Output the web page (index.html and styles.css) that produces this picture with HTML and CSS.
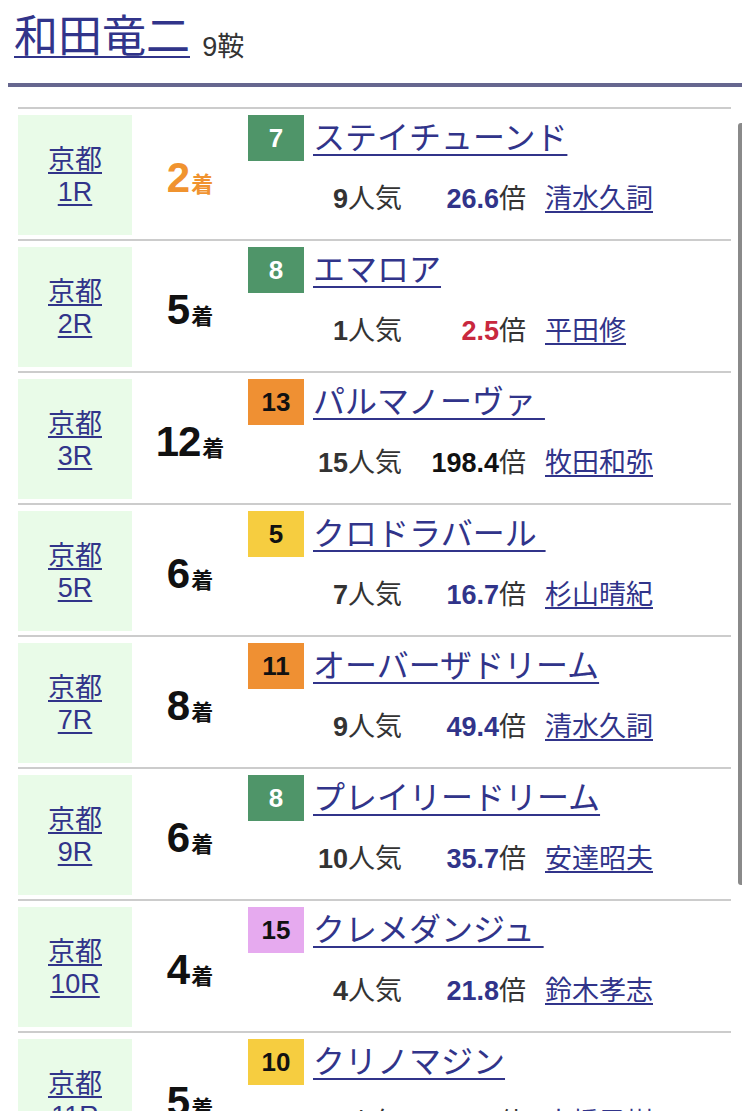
FILE: index.html
```html
<!DOCTYPE html>
<html lang="ja">
<head>
<meta charset="utf-8">
<title>和田竜二</title>
<link rel="stylesheet" href="styles.css">
</head>
<body>
<h1 class="title"><a href="#" class="jockey-name">和田竜二</a> <span class="count">9鞍</span></h1>
<div class="rule"></div>
<div class="races">
  <div class="row">
    <div class="venue"><a href="#">京都<br>1R</a></div>
    <div class="rank second"><span class="num">2</span><span class="suf">着</span></div>
    <div class="info">
      <div class="line1"><span class="badge green">7</span><a href="#" class="horse">ステイチューンド</a></div>
      <div class="line2"><span class="pop"><b>9</b>人気</span><span class="odds"><b>26.6</b>倍</span><a href="#" class="jk">清水久詞</a></div>
    </div>
  </div>
  <div class="row">
    <div class="venue"><a href="#">京都<br>2R</a></div>
    <div class="rank"><span class="num">5</span><span class="suf">着</span></div>
    <div class="info">
      <div class="line1"><span class="badge green">8</span><a href="#" class="horse">エマロア</a></div>
      <div class="line2"><span class="pop"><b>1</b>人気</span><span class="odds fav"><b>2.5</b>倍</span><a href="#" class="jk">平田修</a></div>
    </div>
  </div>
  <div class="row">
    <div class="venue"><a href="#">京都<br>3R</a></div>
    <div class="rank"><span class="num">12</span><span class="suf">着</span></div>
    <div class="info">
      <div class="line1"><span class="badge orange">13</span><a href="#" class="horse">パルマノーヴァ&nbsp;</a></div>
      <div class="line2"><span class="pop"><b>15</b>人気</span><span class="odds long"><b>198.4</b>倍</span><a href="#" class="jk">牧田和弥</a></div>
    </div>
  </div>
  <div class="row">
    <div class="venue"><a href="#">京都<br>5R</a></div>
    <div class="rank"><span class="num">6</span><span class="suf">着</span></div>
    <div class="info">
      <div class="line1"><span class="badge yellow">5</span><a href="#" class="horse">クロドラバール&nbsp;</a></div>
      <div class="line2"><span class="pop"><b>7</b>人気</span><span class="odds"><b>16.7</b>倍</span><a href="#" class="jk">杉山晴紀</a></div>
    </div>
  </div>
  <div class="row">
    <div class="venue"><a href="#">京都<br>7R</a></div>
    <div class="rank"><span class="num">8</span><span class="suf">着</span></div>
    <div class="info">
      <div class="line1"><span class="badge orange">11</span><a href="#" class="horse">オーバーザドリーム</a></div>
      <div class="line2"><span class="pop"><b>9</b>人気</span><span class="odds"><b>49.4</b>倍</span><a href="#" class="jk">清水久詞</a></div>
    </div>
  </div>
  <div class="row">
    <div class="venue"><a href="#">京都<br>9R</a></div>
    <div class="rank"><span class="num">6</span><span class="suf">着</span></div>
    <div class="info">
      <div class="line1"><span class="badge green">8</span><a href="#" class="horse">プレイリードリーム</a></div>
      <div class="line2"><span class="pop"><b>10</b>人気</span><span class="odds"><b>35.7</b>倍</span><a href="#" class="jk">安達昭夫</a></div>
    </div>
  </div>
  <div class="row">
    <div class="venue"><a href="#">京都<br>10R</a></div>
    <div class="rank"><span class="num">4</span><span class="suf">着</span></div>
    <div class="info">
      <div class="line1"><span class="badge pink">15</span><a href="#" class="horse">クレメダンジュ&nbsp;</a></div>
      <div class="line2"><span class="pop"><b>4</b>人気</span><span class="odds"><b>21.8</b>倍</span><a href="#" class="jk">鈴木孝志</a></div>
    </div>
  </div>
  <div class="row">
    <div class="venue"><a href="#">京都<br>11R</a></div>
    <div class="rank"><span class="num">5</span><span class="suf">着</span></div>
    <div class="info">
      <div class="line1"><span class="badge yellow">10</span><a href="#" class="horse">クリノマジン</a></div>
      <div class="line2"><span class="pop"><b>3</b>人気</span><span class="odds"><b>8.4</b>倍</span><a href="#" class="jk">大橋勇樹</a></div>
    </div>
  </div>
</div>
<div class="scroll-thumb"></div>
</body>
</html>
```

FILE: styles.css
```css
html, body {
  margin: 0;
  padding: 0;
  background: #fff;
}
body {
  margin: 0 8px;
  font-family: "Liberation Sans", "Noto Sans CJK JP", sans-serif;
  color: #333;
  height: 1111px;
  overflow: hidden;
  position: relative;
}
a {
  color: #31348a;
  text-decoration: underline;
  text-decoration-thickness: 2px;
  text-underline-offset: 3px;
}
.title {
  margin: 0;
  padding: 8px 0 0 6px;
  height: 75px;
  font-weight: normal;
  font-size: 44px;
  line-height: 58px;
  white-space: nowrap;
}
.title .jockey-name {
  text-underline-offset: 4px;
}
.title .count {
  font-size: 27px;
  color: #333;
  margin-left: 0;
  vertical-align: -4px;
}
.rule {
  height: 4px;
  background: #66678f;
}
.races {
  margin: 20px 11px 0 10px;
  border-top: 2px solid #cccccc;
}
.row {
  display: flex;
  height: 130px;
  border-bottom: 2px solid #cccccc;
}
.venue {
  width: 114px;
  margin: 6px 0 4px;
  background: #e9fbe8;
  display: flex;
  align-items: center;
  justify-content: center;
  text-align: center;
  font-size: 27px;
  line-height: 32px;
}
.venue a {
  padding-top: 2px;
}
.rank {
  width: 116px;
  display: flex;
  align-items: baseline;
  justify-content: center;
  padding-top: 44px;
  box-sizing: border-box;
  color: #111;
  font-weight: bold;
}
.rank .num {
  font-size: 42px;
  line-height: 50px;
  letter-spacing: -1px;
}
.rank .suf {
  font-size: 22px;
  margin-left: 2px;
}
.rank.second {
  color: #f0932f;
}
.info {
  flex: 1;
  padding-top: 6px;
}
.line1 {
  display: flex;
  align-items: center;
  height: 46px;
}
.badge {
  width: 56px;
  height: 46px;
  display: flex;
  align-items: center;
  justify-content: center;
  font-weight: bold;
  font-size: 26px;
  color: #111;
  margin-right: 9px;
}
.badge.green { background: #4f9569; color: #fff; }
.badge.orange { background: #ef9033; }
.badge.yellow { background: #f6cd40; }
.badge.pink { background: #e6aaef; }
.horse {
  font-size: 32px;
  line-height: 40px;
  white-space: nowrap;
  text-underline-offset: 5px;
}
.line2 {
  display: flex;
  align-items: baseline;
  margin-top: 20px;
  height: 36px;
  font-size: 27px;
  line-height: 36px;
  white-space: nowrap;
}
.line2 b {
  font-size: 27px;
}
.pop {
  width: 154px;
  text-align: right;
}
.pop b { color: #333; }
.odds {
  width: 124px;
  text-align: right;
}
.odds b { color: #31348a; }
.odds.fav b { color: #c8283e; }
.odds.long b { color: #111; }
.jk {
  margin-left: 19px;
}
.scroll-thumb {
  position: absolute;
  top: 123px;
  right: -2px;
  width: 6px;
  height: 762px;
  border-radius: 3px;
  background: #8a8a8a;
}
```
